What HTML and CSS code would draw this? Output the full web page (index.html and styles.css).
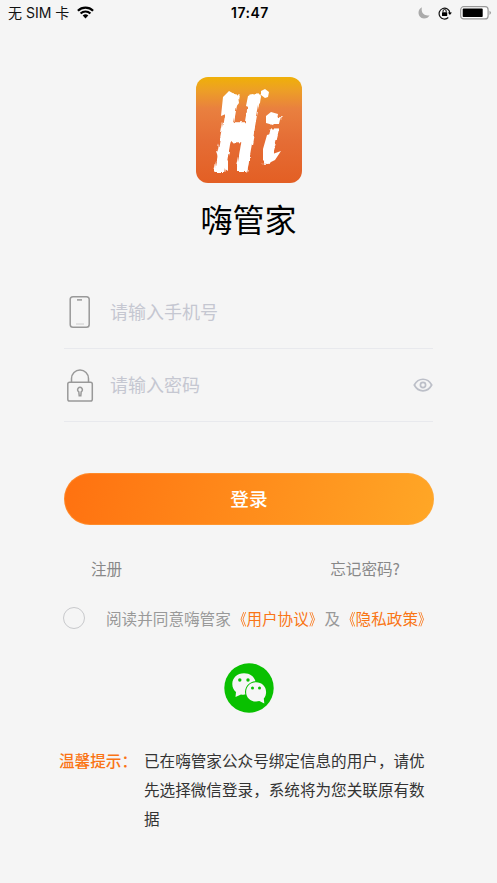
FILE: index.html
```html
<!DOCTYPE html>
<html lang="zh-CN">
<head>
<meta charset="utf-8">
<title>嗨管家</title>
<link rel="stylesheet" href="styles.css">
</head>
<body>
<header class="status">
  <div class="carrier"><span>无 SIM 卡</span>
    <svg width="17" height="13" viewBox="0 0 17 13"><g fill="none" stroke="#000" stroke-width="2.2"><path d="M.9 4.7a10.8 10.8 0 0 1 15.2 0"/><path d="M3.6 7.5a7 7 0 0 1 9.8 0"/></g><path d="M8.5 12.4 5.700 9.600a4 4 0 0 1 5.600 0z"/></svg>
  </div>
  <div class="time">17:47</div>
  <div class="indicators">
    <svg width="12" height="12" viewBox="0 0 12 12"><path fill="#aaa" d="M4 .3C-1.200 2.500-.6 11.300 6 11.500c2.600 0 4.700-1.300 5.600-3.300C6.500 9.500 2.500 5.500 4 .3z"/></svg>
    <svg width="14" height="14" viewBox="0 0 14 14"><path d="M10.3 11.5A5.4 5.4 0 1 1 11.9 7" fill="none" stroke="#111" stroke-width="1.2"/><path d="M9.9 6.4h4l-2 2.6z"/><rect x="4" y="6.2" width="5.2" height="3.9" rx=".5"/><path d="M5 6.3V5.1a1.6 1.6 0 0 1 3.2 0v1.2" fill="none" stroke="#111" stroke-width="1"/></svg>
    <svg width="32" height="14" viewBox="0 0 32 14"><rect x=".7" y=".7" width="27.4" height="12.2" rx="3" fill="#fff" stroke="#999" stroke-width="1.2"/><rect x="2.7" y="2.6" width="20" height="8.5" rx=".8"/><path fill="#999" d="M29.5 4.7q3 2.1 0 4.2z"/></svg>
  </div>
</header>
<main class="page">
  <svg class="logo" viewBox="0 0 106 106">
    <defs>
      <linearGradient id="bg" x1="0" y1="0" x2="0" y2="1"><stop offset="0" stop-color="#efb008"/><stop offset=".12" stop-color="#eda025"/><stop offset=".3" stop-color="#e9803f"/><stop offset=".6" stop-color="#e56d35"/><stop offset="1" stop-color="#e35f24"/></linearGradient>
      <filter id="brush" x="-20%" y="-20%" width="140%" height="140%"><feTurbulence type="fractalNoise" baseFrequency=".3 .07" numOctaves="2" seed="4"/><feDisplacementMap in="SourceGraphic" scale="4.500" xChannelSelector="R" yChannelSelector="G"/></filter>
    </defs>
    <rect width="106" height="106" rx="12" fill="url(#bg)"/>
    <g class="wordmark" filter="url(#brush)">
      <text transform="translate(17.500 91) skewX(-10) scale(.49 1)" font-size="101" stroke-width="8">H</text>
      <text transform="translate(64 86) skewX(-13) scale(.82 1)" font-size="62" stroke-width="1.500">i</text>
    </g>
    <g fill="#fff"><path d="M27 20l6-6 9 5 1 7-6 8-12 5zM52 19l5-2 2 3 6-1-1 7-7 6-7-3zM65 14l4-2 4 3-1 5-3 1-4-3zM70 39l5-4 7 2-1 6-4 5-7-2z"/><path d="M20 74l6 2 6 8v10l-3-2v-5l-3 4-2-5zM43 80l10 2-2 14-3-7-1 4zM67 72l4-14 7-2-4 22 11-4-6 9-8 4-4-4z"/></g>
  </svg>
  <h1>嗨管家</h1>
  <form class="login">
    <label class="field">
      <svg class="field-icon" width="30" height="34" viewBox="0 0 30 34" fill="none" stroke="#999" stroke-width="1.5"><rect x="6.200" y="1.800" width="19" height="30.500" rx="2.800"/><path d="M13 4.900h5"/><path d="M12 29h8" stroke="#ccc" stroke-width="1"/></svg>
      <input type="text" placeholder="请输入手机号">
    </label>
    <label class="field">
      <svg class="field-icon" width="30" height="34" viewBox="0 0 30 34" fill="none" stroke="#999" stroke-width="1.500"><g transform="translate(1 .5)"><rect x="2.800" y="13.800" width="24.500" height="18.800" rx="1.800"/><path d="M6.500 13.500V10a8.500 8.500 0 0 1 17 0v3.500"/><path d="M13.800 23.300a2.400 2.400 0 1 1 2.400 0l-.4 4h-1.600z"/></g></svg>
      <input type="password" placeholder="请输入密码">
      <svg class="eye" width="20" height="14" viewBox="0 0 20 14" fill="none" stroke="#bcbfc8" stroke-width="1.700"><path d="M1.300 7C5.400-.7 14.600-.7 18.700 7 14.600 14.700 5.400 14.700 1.300 7z"/><circle cx="10" cy="7" r="2.600"/></svg>
    </label>
    <button type="button">登录</button>
  </form>
  <nav class="links"><a>注册</a><a>忘记密码?</a></nav>
  <div class="agree"><span class="radio"></span><p>阅读并同意嗨管家<a><span class="mark open">《</span>用户协议<span class="mark close">》</span></a>及<a><span class="mark open">《</span>隐私政策<span class="mark close">》</span></a></p></div>
  <svg class="wechat" viewBox="0 0 50 50"><circle cx="25" cy="25" r="24.700" fill="#09c000"/><path fill="#f6f6f6" d="M20 10.300C13.200 10.300 8.300 15 8.300 20.900c0 3.400 1.400 6.200 3.700 8.200L11.500 34l5.500-2.600c1.400.4 2.900.4 4.300.2C19.800 24.500 25 18.500 31.500 18.300 30 13.500 26 10.300 20 10.300z"/><path fill="#f6f6f6" d="M32 19.300c-5.700 0-9.900 4.200-9.900 9.600s4.200 9.600 9.900 9.600c1.200 0 2.300-.2 3.300-.5l5 2.400-.5-4.800c1.500-1.700 2.300-4.200 2.300-6.700 0-5.400-4.400-9.600-10.100-9.600z"/><g fill="#09c000"><circle cx="15.800" cy="17" r="1.700"/><circle cx="24" cy="17" r="1.700"/><circle cx="28.500" cy="25" r="1.500"/><circle cx="35.500" cy="25" r="1.500"/></g></svg>
  <section class="tips"><strong>温馨提示：</strong><p>已在嗨管家公众号绑定信息的用户，请优先选择微信登录，系统将为您关联原有数据</p></section>
</main>
</body>
</html>
```
FILE: styles.css
```css
* { box-sizing: border-box; }
body {
  margin: 0;
  height: 883px;
  background: #f5f5f5;
  font-family: "Noto Sans CJK SC", sans-serif;
  font-size: 15.6px;
  color: #333;
  overflow: hidden;
}
svg { display: block; flex: none; }
h1, p { margin: 0; font-weight: 400; }
.status {
  display: grid;
  grid-template-columns: 1fr auto 1fr;
  align-items: center;
  height: 25px;
  padding: 0 5px 0 8px;
  font-family: Inter, "Noto Sans CJK SC", sans-serif;
  font-size: 14px;
  line-height: 18px;
  color: #111;
}
.carrier { display: flex; align-items: center; gap: 8px; white-space: nowrap; }
.time { font-weight: 600; font-size: 14px; letter-spacing: .5px; color: #000; }
.indicators { display: flex; align-items: center; justify-content: flex-end; gap: 8px; }
.page { display: flex; flex-direction: column; padding: 52px 64px 0; }
.logo { width: 106px; height: 106px; align-self: center; overflow: visible; }
.wordmark {
  fill: #fff;
  stroke: #fff;
  font-family: "Liberation Sans", sans-serif;
  font-weight: 700;
}
h1 {
  margin-top: 12px;
  font-size: 32px;
  line-height: 46px;
  text-align: center;
  color: #000;
}
.login { margin-top: 35px; }
.field {
  display: flex;
  align-items: center;
  height: 73px;
  border-bottom: 1px solid #e8e9ed;
}
.field-icon { margin-right: 16px; }
.field input {
  flex: 1;
  min-width: 0;
  padding: 0 0 2px;
  border: 0;
  outline: 0;
  background: none;
  font: 18px "Noto Sans CJK SC", sans-serif;
}
.field input::placeholder { color: #c5c7d1; }
button {
  display: block;
  width: 370px;
  height: 52px;
  margin-top: 51px;
  padding: 0 0 4px;
  border: 1px solid #ffad5360;
  border-radius: 26px;
  background: linear-gradient(105deg, #ff7110, #ffa726) border-box;
  font: 500 18.7px "Noto Sans CJK SC", sans-serif;
  color: #fff;
}
.links {
  display: flex;
  justify-content: space-between;
  margin-top: 31px;
  padding: 0 33px 0 27px;
  line-height: 24px;
  color: #888;
}
.agree {
  display: flex;
  align-items: center;
  height: 24px;
  margin-top: 26px;
  white-space: nowrap;
  color: #999;
}
.agree a { color: #f97516; }
.mark { display: inline-block; transform: scaleX(.8); }
.mark.open { transform-origin: right; }
.mark.close { transform-origin: left; }
.radio {
  flex: none;
  width: 22px;
  height: 22px;
  margin: 0 21px 0 -1px;
  border: 1px solid #c8c9cc;
  border-radius: 50%;
}
.wechat { width: 50px; height: 50px; margin-top: 33px; align-self: center; }
.tips {
  display: flex;
  gap: 7px;
  margin: 33px 0 0 -5px;
  line-height: 28.8px;
}
.tips strong { flex: none; font-weight: 500; color: #fa7415; }
.tips p { width: 282px; }
```
